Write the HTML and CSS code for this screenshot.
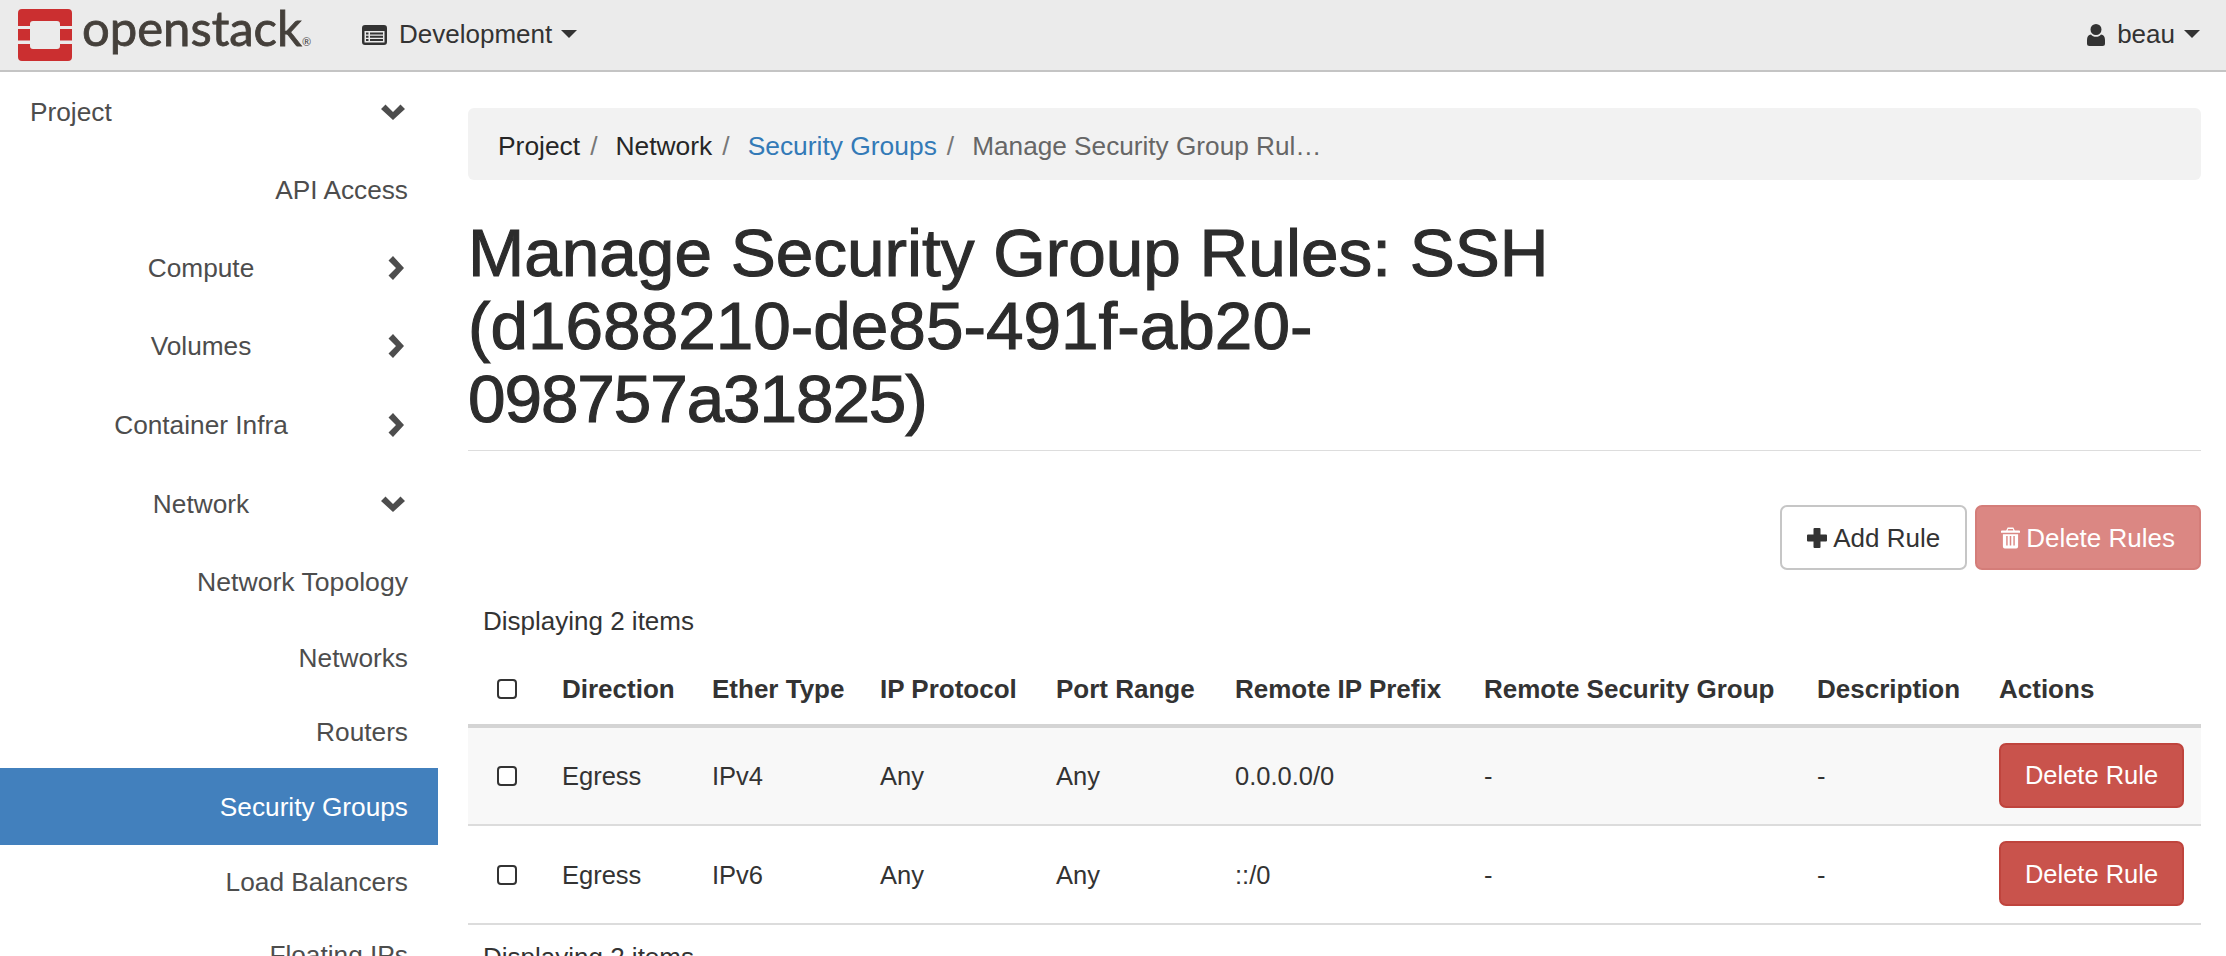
FILE: index.html
```html
<!DOCTYPE html>
<html lang="en">
<head>
<meta charset="utf-8">
<title>Manage Security Group Rules</title>
<link rel="stylesheet" href="styles.css">
</head>
<body>
<header class="navbar">
  <a class="brand">
    <svg class="logo-mark" viewBox="0 0 54 52" width="54" height="52"><path fill="#cb2f30" fill-rule="evenodd" d="M4 0h46a4 4 0 0 1 4 4v13H42v-2a3 3 0 0 0-3-3H15a3 3 0 0 0-3 3v2H0V4a4 4 0 0 1 4-4zM0 20h12v11.500H0zM42 20h12v11.500H42zM0 35h12v2a3 3 0 0 0 3 3h24a3 3 0 0 0 3-3v-2h12v13a4 4 0 0 1-4 4H4a4 4 0 0 1-4-4z"/></svg>
    <span class="logo-text">openstack<small class="reg">®</small></span>
  </a>
  <a class="nav-item project-pick">
    <svg class="nav-ico" viewBox="0 0 25 20" width="25" height="20"><path fill="#333" fill-rule="evenodd" d="M3 0h19a3 3 0 0 1 3 3v14a3 3 0 0 1-3 3H3a3 3 0 0 1-3-3V3a3 3 0 0 1 3-3zM2.500 6v11.500h20V6zM4 7.500h2.500v2H4zM8 7.500h13v2H8zM4 10.800h2.500v2H4zM8 10.800h13v2H8zM4 14h2.500v2H4zM8 14h13v2H8z"/></svg>
    <span class="nav-label">Development</span> <i class="caret"></i>
  </a>
  <a class="nav-item user-menu">
    <svg class="nav-ico" viewBox="0 0 18 22" width="18" height="22"><path fill="#333" d="M9 0a5.500 5.500 0 0 1 5.500 5.500A5.500 5.500 0 0 1 9 11a5.500 5.500 0 0 1-5.500-5.500A5.500 5.500 0 0 1 9 0zM4 10.500C5 12 7 12.800 9 12.800s4-.8 5-2.300c2.500.3 4 2 4 5.500v3.500a2.500 2.500 0 0 1-2.500 2.500h-13A2.500 2.500 0 0 1 0 19.500V16c0-3.500 1.500-5.200 4-5.500z"/></svg>
    <span class="nav-label">beau</span> <i class="caret"></i>
  </a>
</header>
<div class="layout">
  <nav class="sidebar">
    <a class="side-row"><span>Project</span><svg class="chev" viewBox="0 0 24 16"><path d="M0 5L4.500.5 12 8 19.500.5 24 5 12 16z"/></svg></a>
    <a class="side-link lead">API Access</a>
    <a class="side-group"><span>Compute</span><svg class="chev right" viewBox="0 0 16 24"><path d="M5 0L16 12 5 24 .5 19.500 8 12 .5 4.500z"/></svg></a>
    <a class="side-group"><span>Volumes</span><svg class="chev right" viewBox="0 0 16 24"><path d="M5 0L16 12 5 24 .5 19.500 8 12 .5 4.500z"/></svg></a>
    <a class="side-group nudge"><span>Container Infra</span><svg class="chev right" viewBox="0 0 16 24"><path d="M5 0L16 12 5 24 .5 19.500 8 12 .5 4.500z"/></svg></a>
    <a class="side-group nudge-more"><span>Network</span><svg class="chev" viewBox="0 0 24 16"><path d="M0 5L4.500.5 12 8 19.500.5 24 5 12 16z"/></svg></a>
    <a class="side-link first">Network Topology</a>
    <a class="side-link">Networks</a>
    <a class="side-link wide">Routers</a>
    <a class="side-link active">Security Groups</a>
    <a class="side-link">Load Balancers</a>
    <a class="side-link">Floating IPs</a>
  </nav>
  <main class="content">
    <ol class="crumbs">
      <li>Project<span class="sep">/</span></li>
      <li>Network<span class="sep">/</span></li>
      <li class="link">Security Groups<span class="sep">/</span></li>
      <li class="current">Manage Security Group Rul…</li>
    </ol>
    <h1 class="title">Manage Security Group Rules: SSH<br>(d1688210-de85-491f-ab20-<br><span class="tight">098757a31825)</span></h1>
    <div class="actions">
      <a class="btn btn-default"><svg viewBox="0 0 20 20" width="20" height="20"><path fill="#333" d="M7.500 0h5a1 1 0 0 1 1 1v5.500H19a1 1 0 0 1 1 1v5a1 1 0 0 1-1 1h-5.500V19a1 1 0 0 1-1 1h-5a1 1 0 0 1-1-1v-5.500H1a1 1 0 0 1-1-1v-5a1 1 0 0 1 1-1h5.500V1a1 1 0 0 1 1-1z"/></svg>Add Rule</a>
      <a class="btn btn-danger disabled"><svg viewBox="0 0 20 22" width="19" height="22"><path fill="#fff" fill-rule="evenodd" d="M7 0h6l1.500 3H19a1 1 0 0 1 1 1v1.500H0V4a1 1 0 0 1 1-1h4.500zM7.500 1.500L7 3h6l-.5-1.500zM2 7h16v13a2 2 0 0 1-2 2H4a2 2 0 0 1-2-2zM5.500 9v10H7V9zM9.200 9v10h1.600V9zM13 9v10h1.500V9z"/></svg>Delete Rules</a>
    </div>
    <p class="count">Displaying 2 items</p>
    <table class="rules">
      <colgroup><col class="c0"><col class="c1"><col class="c2"><col class="c3"><col class="c4"><col class="c5"><col class="c6"><col class="c7"><col class="c8"></colgroup>
      <thead>
        <tr><th><i class="check"></i></th><th>Direction</th><th>Ether Type</th><th>IP Protocol</th><th>Port Range</th><th>Remote IP Prefix</th><th>Remote Security Group</th><th>Description</th><th>Actions</th></tr>
      </thead>
      <tbody>
        <tr class="odd"><td><i class="check"></i></td><td>Egress</td><td>IPv4</td><td>Any</td><td>Any</td><td>0.0.0.0/0</td><td>-</td><td>-</td><td class="act"><a class="btn btn-danger">Delete Rule</a></td></tr>
        <tr><td><i class="check"></i></td><td>Egress</td><td>IPv6</td><td>Any</td><td>Any</td><td>::/0</td><td>-</td><td>-</td><td class="act"><a class="btn btn-danger">Delete Rule</a></td></tr>
      </tbody>
    </table>
    <p class="count foot">Displaying 2 items</p>
  </main>
</div>
</body>
</html>
```
FILE: styles.css
```css
* { box-sizing: border-box; }
html, body { margin: 0; height: 956px; overflow: hidden; background: #fff; }
body { font-family: "Liberation Sans", Arial, sans-serif; font-size: 26px; line-height: 36px; color: #333; }

.navbar { height: 72px; background: #ebebeb; border-bottom: 2px solid #c4c4c4; display: flex; align-items: center; padding: 0 26px 0 18px; }
.brand { display: flex; align-items: center; width: 344px; flex: none; }
.logo-mark { flex: none; }
.logo-text { font-family: Lato, sans-serif; font-size: 49px; line-height: 60px; color: #45403b; margin-left: 10px; -webkit-text-stroke: .8px #45403b; white-space: nowrap; margin-top: -2px; }
.reg { font-size: 11px; -webkit-text-stroke: 0; }
.nav-item { display: flex; align-items: center; gap: 12px; }
.nav-label { margin-top: -2px; }
.project-pick { flex: 1; }
.caret { width: 0; height: 0; border-top: 8px solid #333; border-left: 8px solid transparent; border-right: 8px solid transparent; margin-left: -3px; margin-top: -2px; }

.layout { display: flex; height: 884px; }
.sidebar { width: 438px; flex: none; color: #4d4d4d; overflow: hidden; padding-top: 1px; font-size: 26.250px; }
.side-row, .side-group, .side-link { display: flex; align-items: center; height: 78px; position: relative; }
.side-row { padding-left: 30px; }
.side-link { justify-content: flex-end; padding-right: 30px; height: 73px; }
.side-link.lead { height: 78px; }
.side-link.first { height: 80px; padding-top: 2px; font-size: 26.600px; }
.side-link.wide { height: 74px; padding-top: 2px; }
.side-group { justify-content: center; padding-right: 36px; }
.side-group.nudge { padding-top: 2px; }
.side-group.nudge-more { padding-top: 3px; }
.side-link.active { height: 77px; background: #4280bd; color: #fff; }
.chev { position: absolute; right: 33px; width: 24px; height: 16px; fill: #4d4d4d; }
.chev.right { right: 34px; width: 16px; height: 24px; }

.content { flex: 1; padding: 36px 25px 0 30px; min-width: 0; }
.crumbs { display: flex; list-style: none; margin: 0; padding: 3px 30px 0; height: 72px; align-items: center; background: #f2f2f2; border-radius: 6px; }
.crumbs li { white-space: nowrap; color: #262626; margin-right: 18px; font-size: 26.400px; }
.sep { color: #777; margin-left: 10px; }
.crumbs .link { color: #337ab7; }
.crumbs .current { color: #666; margin-right: 0; font-size: 26.200px; }
.title { font-size: 67.500px; line-height: 73px; font-weight: 400; color: #2c2c2c; -webkit-text-stroke: 1.100px #2c2c2c; margin: 36px 0 0; padding-bottom: 15px; border-bottom: 1px solid #ddd; }
.tight { letter-spacing: -1.100px; }
.actions { display: flex; justify-content: flex-end; gap: 8px; margin-top: 54px; }
.btn { display: inline-flex; align-items: center; justify-content: center; gap: 6px; height: 65px; border-radius: 7px; padding: 0 25px; border: 2px solid; }
.btn-default { background: #fff; border-color: #c6c6c6; color: #333; }
.btn-danger { background: #c9534c; border-color: #bf443d; color: #fff; }
.btn-danger.disabled { background: #db8783; border-color: #d47d79; padding: 0 24px; }
.count { margin: 33px 0 0 15px; color: #333; }
.rules { width: 1733px; table-layout: fixed; border-collapse: collapse; margin-top: 22px; }
.c0 { width: 94px; } .c1 { width: 150px; } .c2 { width: 168px; } .c3 { width: 176px; } .c4 { width: 179px; } .c5 { width: 249px; } .c6 { width: 333px; } .c7 { width: 182px; } .c8 { width: 202px; }
.rules th, .rules td { text-align: left; padding: 0; vertical-align: middle; white-space: nowrap; }
.rules td { font-size: 25.500px; }
.rules th { height: 65px; font-weight: 700; border-bottom: 4px solid #d4d4d4; padding-bottom: 7px; }
.rules td { height: 99px; border-bottom: 2px solid #dcdcdc; }
.rules td.act { padding-bottom: 2px; }
.rules th:first-child, .rules td:first-child { padding-left: 29px; }
.odd td { background: #f8f8f8; }
.check { display: block; width: 20px; height: 20px; border: 2px solid #333; border-radius: 4px; background: #fff; }
.rules .btn { width: 185px; padding: 0; }
.foot { margin-top: 14px; }
```
